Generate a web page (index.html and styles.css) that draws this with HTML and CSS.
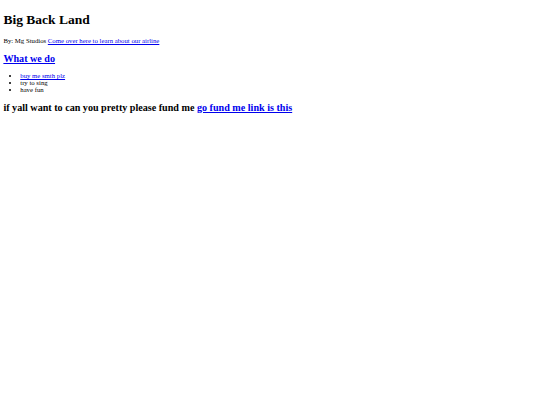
FILE: index.html
```html
<!DOCTYPE html>
<html>
<head>
<meta charset="utf-8">
<title>Big Back Land</title>
<link rel="stylesheet" href="styles.css">
</head>
<body class="page">
<h1 class="title">Big Back Land</h1>
<p class="byline">By: Mg Studios <a class="link" href="#">Come over here to learn about our airline</a></p>
<h2 class="section"><a class="link" href="#">What we do</a></h2>
<ul class="list">
<li><a class="link" href="#">buy me smth plz</a></li>
<li>try to sing</li>
<li>have fun</li>
</ul>
<h2 class="section">if yall want to can you pretty please fund me <a class="link" href="#">go fund me link is this</a></h2>
</body>
</html>
```
FILE: styles.css
```css
html { background: #fff; }
.page {
  margin: 3.375px;
  font-family: "Liberation Serif", "Times New Roman", serif;
  font-size: 6.75px;
  color: #000;
}
.title {
  font-size: 13.5px;
  margin: 0.67em 0;
}
.byline { margin: 1em 0; }
.section {
  font-size: 10.125px;
  margin: 0.83em 0;
}
.list {
  margin: 1em 0;
  padding-left: 16.875px;
}
.link { color: #0000ee; }
```
